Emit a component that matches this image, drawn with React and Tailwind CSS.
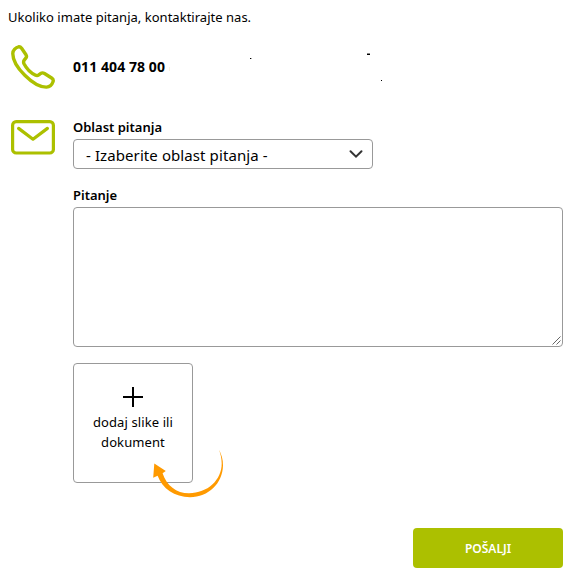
import React from 'react';

const PhoneIcon = () => (
  <svg className="block" width="44" height="44" viewBox="0 0 44 44" fill="none" stroke="#acc000" strokeWidth="3.4" strokeLinejoin="round">
    <path d="M1.8 8.4C1.8 5.4 4.8 2.3 7.6 1.8C8.9 1.6 9.8 2.2 10.6 3.3L15 9.8C15.8 11.1 15.7 12.1 14.8 13.1L13.4 14.8C12.4 16 12.4 17.4 13 18.7C15.4 23.4 19.7 27.9 24.6 30.2C25.7 30.7 26.8 30.6 27.8 29.9L29.6 28.5C31 27.6 32.2 27.7 33.5 28.5L40.6 33C42.1 34 42.6 35 42.1 36.5C41.1 39.5 38.4 42 35.5 42.1C22.8 42.4 1.6 21.4 1.8 8.4Z" />
  </svg>
);

const MailIcon = () => (
  <svg className="block" width="44" height="35" viewBox="0 0 44 35" fill="none" stroke="#acc000" strokeWidth="3.2">
    <rect x="1.6" y="1.6" width="40.8" height="31.4" rx="3.6" />
    <path d="M7.6 8.4L22 19.2L36.4 8.4" strokeLinecap="round" strokeLinejoin="round" />
  </svg>
);

const ChevronIcon = () => (
  <svg width="14" height="10" viewBox="0 0 14 10" fill="none" stroke="#333" strokeWidth="2">
    <path d="M1.5 2.3L7 7.7L12.5 2.3" strokeLinecap="round" />
  </svg>
);

const PlusIcon = () => (
  <svg className="block" width="20" height="20" viewBox="0 0 20 20" fill="#000">
    <path d="M9 0H11V9H20V11H11V20H9V11H0V9H9Z" />
  </svg>
);

const ResizeGrip = () => (
  <svg className="absolute right-0.5 bottom-0.5" width="9" height="9" viewBox="0 0 9 9" stroke="#666" strokeWidth="1">
    <path d="M0.5 8.5L8.5 0.5M4.5 8.5L8.5 4.5" />
  </svg>
);

const Arrow = () => (
  <svg className="absolute left-[79px] top-[86px]" width="72" height="50" viewBox="0 0 72 50" fill="#ff9a00">
    <path d="M2.3 14.4L13.8 22L10.6 24.2C14.4 36.4 24.4 44.3 37 44.3C55.5 44.3 69.8 31 69.7 14.6C69.6 9.4 68.6 5 67 0.8C69.4 5.4 71.1 10 71 16.5C70.6 34.5 56.5 48 38 48.2C22.5 48.2 10.4 39.6 5.6 26.8L1.2 28.8Z" />
  </svg>
);

// Stray marks next to the phone number
const Marks = () => (
  <svg className="absolute left-24 -top-1.5" width="220" height="32" viewBox="0 0 220 32" fill="#000">
    <rect x="81" y="7" width="1" height="1" />
    <rect x="82" y="7" width="1" height="1" fill="#aaa" />
    <rect x="198" y="3" width="3" height="1" />
    <rect x="198" y="2" width="3" height="1" fill="#888" />
    <rect x="212" y="29" width="1" height="1" />
    <rect x="0" y="16" width="1" height="4" fill="#fbf3df" />
  </svg>
);

export default function App() {
  return (
    <div className="h-[577px] w-[578px] overflow-hidden bg-white pl-2 pr-[15px] pt-[7px] font-['Noto_Sans','Open_Sans',sans-serif] text-[13px] leading-5 text-black">
      <p className="whitespace-nowrap tracking-[0.02px]">Ukoliko imate pitanja, kontaktirajte nas.</p>

      <div className="mt-[18px] flex h-11 items-center pl-[3px]">
        <PhoneIcon />
        <div className="relative ml-[18px] font-bold">
          <span className="block whitespace-nowrap text-sm leading-5 tracking-[0.08px]">011 404 78 00</span>
          <Marks />
        </div>
      </div>

      <div className="mt-7 flex pl-[3px]">
        <div className="mt-[3px] w-[62px] shrink-0">
          <MailIcon />
        </div>
        <div className="flex-1">
          <label className="block h-[22px] font-semibold">Oblast pitanja</label>
          <button className="flex h-[30px] w-[300px] items-center justify-between rounded border border-[#999] pl-3 pr-[9px] text-[15px]">
            <span className="pt-0.5 tracking-[0.09px]">- Izaberite oblast pitanja -</span>
            <ChevronIcon />
          </button>

          <label className="mt-4 block h-[22px] font-semibold">Pitanje</label>
          <div className="relative h-[140px]">
            <textarea className="block h-full w-full resize-none rounded border border-[#999] outline-none" />
            <ResizeGrip />
          </div>

          <div className="relative mt-4 h-[120px] w-[120px]">
            <button className="flex h-full w-full flex-col items-center rounded border border-[#999] pt-[23px]">
              <PlusIcon />
              <span className="mt-[5px] w-[90px] text-center tracking-[0.1px]">dodaj slike ili dokument</span>
            </button>
            <Arrow />
          </div>

          <div className="mt-[45px] flex justify-end">
            <button className="h-10 w-[150px] rounded bg-[#acc000] pt-0.5 text-xs font-semibold text-white">POŠALJI</button>
          </div>
        </div>
      </div>
    </div>
  );
}
